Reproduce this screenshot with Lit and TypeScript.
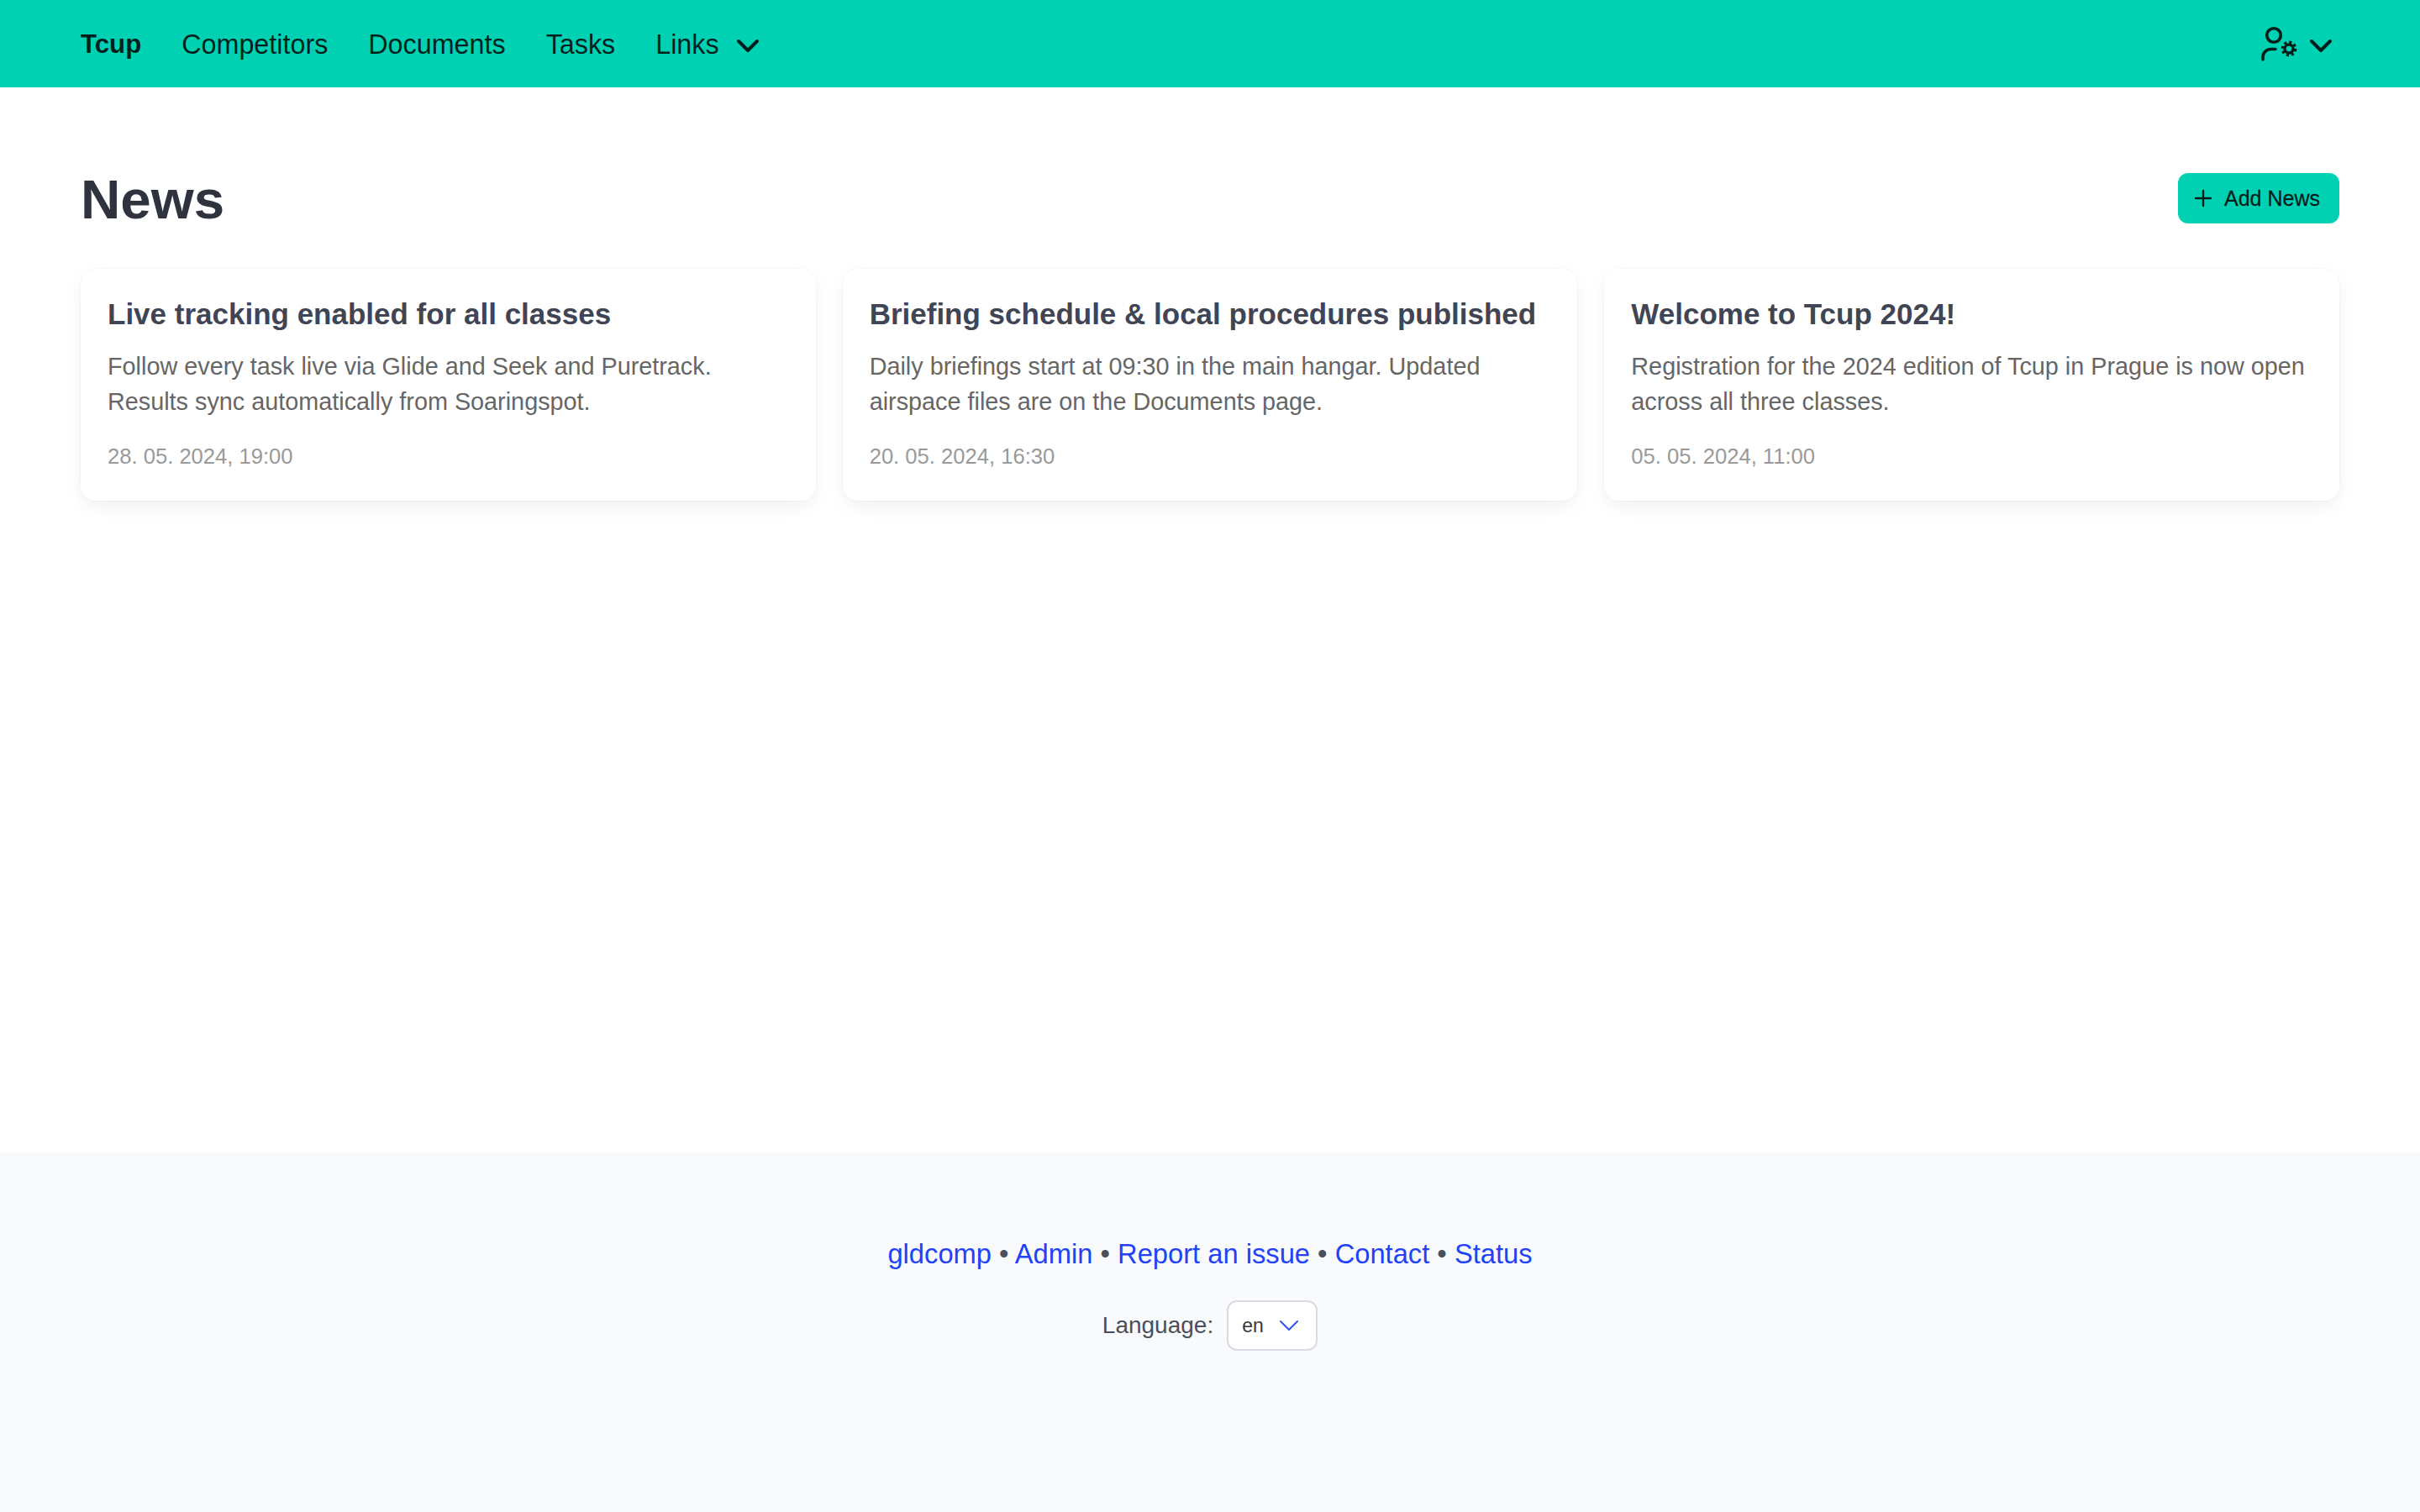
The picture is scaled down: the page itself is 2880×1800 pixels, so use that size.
import { LitElement, html, css } from 'lit'
import { customElement } from 'lit/decorators.js'

const NEWS = [
  {
    title: 'Live tracking enabled for all classes',
    body: 'Follow every task live via Glide and Seek and Puretrack. Results sync automatically from Soaringspot.',
    date: '28. 05. 2024, 19:00',
  },
  {
    title: 'Briefing schedule & local procedures published',
    body: 'Daily briefings start at 09:30 in the main hangar. Updated airspace files are on the Documents page.',
    date: '20. 05. 2024, 16:30',
  },
  {
    title: 'Welcome to Tcup 2024!',
    body: 'Registration for the 2024 edition of Tcup in Prague is now open across all three classes.',
    date: '05. 05. 2024, 11:00',
  },
]

const chevron = html`<svg class="chevron" viewBox="0 0 30 18" fill="none" stroke="currentColor" stroke-width="4" stroke-linecap="round" stroke-linejoin="round"><path d="M4 3l11 11 11-11"></path></svg>`

@customElement('app-root')
export class AppRoot extends LitElement {
  static styles = css`
    :host {
      display: flex;
      flex-direction: column;
      min-height: 1800px;
      background: #fff;
      font-family: 'Liberation Sans', Arial, sans-serif;
      font-size: 32px;
      color: #4a4f5c;
    }

    .navbar {
      display: flex;
      align-items: center;
      justify-content: space-between;
      height: 104px;
      padding: 0 48px 0 96px;
      background: #00d1b2;
      color: rgba(0, 0, 0, 0.85);
    }

    .nav-start {
      display: flex;
      align-items: center;
      gap: 48px;
      padding-top: 2px;
      font-size: 32.3px;
    }

    .brand {
      font-size: 31.2px;
      font-weight: 700;
    }

    .links {
      display: flex;
      align-items: center;
      gap: 19px;
    }

    .chevron {
      width: 30px;
      height: 18px;
      margin-top: 4px;
      display: block;
    }

    .user {
      display: flex;
      align-items: center;
      gap: 11px;
      margin-right: 55px;
    }

    .user .chevron {
      margin-top: 6px;
    }

    .user-icon {
      width: 48px;
      height: 48px;
      display: block;
    }

    main {
      flex: 1;
      padding: 96px 96px 0;
    }

    .head {
      display: flex;
      align-items: center;
      justify-content: space-between;
      margin-bottom: 48px;
    }

    h1 {
      margin: 0;
      padding-top: 3px;
      font-size: 65.5px;
      line-height: 69px;
      font-weight: 700;
      color: #2e333d;
    }

    .add {
      display: flex;
      align-items: center;
      gap: 13px;
      height: 60px;
      width: 192px;
      box-sizing: border-box;
      padding: 0 18px;
      border: none;
      border-radius: 12px;
      background: #00d1b2;
      color: rgba(0, 0, 0, 0.85);
      font: 400 25px 'Liberation Sans', Arial, sans-serif;
      -webkit-text-stroke: 0.3px currentColor;
      white-space: nowrap;
    }

    .add svg {
      width: 24px;
      height: 24px;
      flex: none;
    }

    .cards {
      display: grid;
      grid-template-columns: repeat(3, 1fr);
      gap: 32px;
    }

    .card {
      padding: 32px 32px 34px;
      border-radius: 18px;
      background: #fff;
      box-shadow: 0 8px 24px -4px rgba(10, 10, 10, 0.08), 0 0 0 1px rgba(10, 10, 10, 0.02);
    }

    h2 {
      margin: 0 0 19px;
      font-size: 35px;
      line-height: 44px;
      font-weight: 700;
      color: #3f4555;
    }

    .card p {
      margin: 0;
      font-size: 28.8px;
      line-height: 42px;
      color: #666;
    }

    .date {
      margin-top: 25px;
      font-size: 25.6px;
      line-height: 38px;
      color: #999;
    }

    footer {
      height: 428px;
      box-sizing: border-box;
      padding-top: 97px;
      background: #f9fafb;
      text-align: center;
    }

    .foot-links {
      line-height: 48px;
      font-size: 32.7px;
    }

    a {
      color: #2142f5;
      text-decoration: none;
    }

    .lang {
      display: flex;
      align-items: center;
      justify-content: center;
      gap: 16px;
      margin-top: 31px;
      font-size: 28px;
    }

    .select {
      display: flex;
      align-items: center;
      justify-content: space-between;
      width: 108px;
      height: 60px;
      box-sizing: border-box;
      padding: 0 20px 0 16px;
      border: 2px solid #d9dae3;
      border-radius: 12px;
      background: #fff;
      font-size: 23px;
      color: #363636;
    }

    .select svg {
      width: 24px;
      height: 14px;
      color: #3352f7;
    }
  `

  render() {
    return html`
      <nav class="navbar">
        <div class="nav-start">
          <span class="brand">Tcup</span>
          <span>Competitors</span>
          <span>Documents</span>
          <span>Tasks</span>
          <span class="links">Links ${chevron}</span>
        </div>
        <div class="user">
          <svg class="user-icon" viewBox="0 0 48 48" fill="none" stroke="currentColor" stroke-width="3.6" stroke-linecap="round" stroke-linejoin="round">
            <circle cx="18" cy="14" r="8.3"></circle>
            <path d="M5 43v-3a9.5 9.5 0 0 1 9.5-9.5H20"></path>
            <circle cx="36" cy="30" r="5" stroke-width="3.4"></circle>
            <circle cx="36" cy="30" r="7.8" stroke-width="3.2" stroke-linecap="butt" stroke-dasharray="3.1 3.03"></circle>
          </svg>
          ${chevron}
        </div>
      </nav>
      <main>
        <div class="head">
          <h1>News</h1>
          <button class="add">
            <svg viewBox="0 0 24 24" fill="none" stroke="currentColor" stroke-width="2.4" stroke-linecap="round"><path d="M12 3v18M3 12h18"></path></svg>
            Add News
          </button>
        </div>
        <div class="cards">
          ${NEWS.map(
            (n) => html`
              <article class="card">
                <h2>${n.title}</h2>
                <p>${n.body}</p>
                <div class="date">${n.date}</div>
              </article>
            `,
          )}
        </div>
      </main>
      <footer>
        <div class="foot-links">
          <a href="#">gldcomp</a> • <a href="#">Admin</a> • <a href="#">Report an issue</a> • <a href="#">Contact</a> •
          <a href="#">Status</a>
        </div>
        <div class="lang">
          <span>Language:</span>
          <div class="select">
            <span>en</span>
            <svg viewBox="0 0 24 14" fill="none" stroke="currentColor" stroke-width="2" stroke-linecap="round" stroke-linejoin="round"><path d="M2 2l10 10 10-10"></path></svg>
          </div>
        </div>
      </footer>
    `
  }
}
